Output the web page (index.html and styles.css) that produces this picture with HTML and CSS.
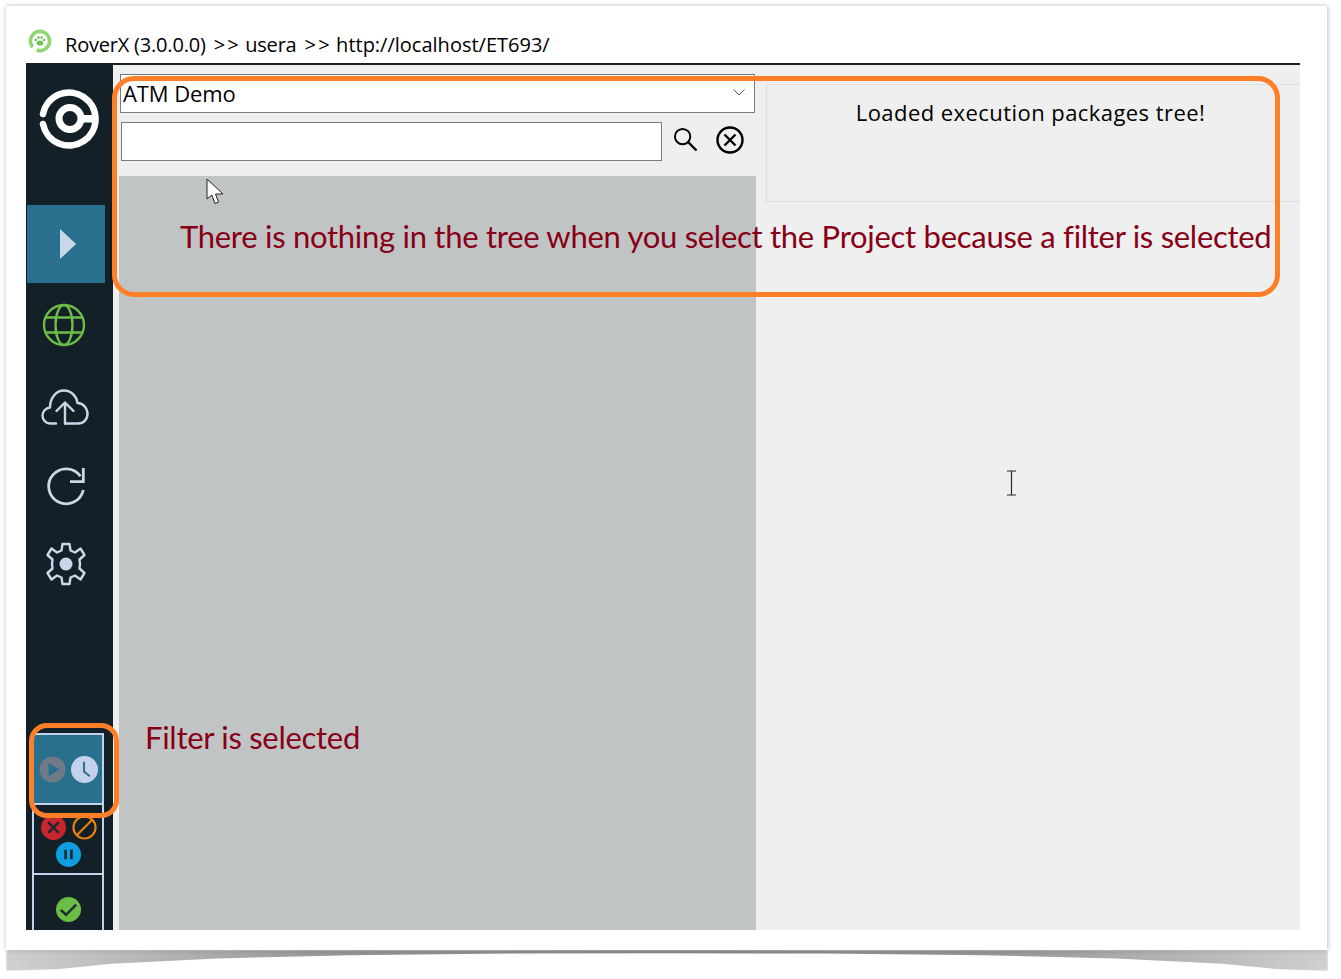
FILE: index.html
```html
<!DOCTYPE html>
<html lang="en">
<head>
<meta charset="utf-8">
<title>RoverX</title>
<link rel="stylesheet" href="styles.css">
</head>
<body>
<div class="drop-shadow"></div>
<main class="sheet">
  <header class="titlebar">
    <svg class="title-icon" viewBox="0 0 24 24"><circle cx="12" cy="12" r="9.600" fill="none" stroke="#8fd672" stroke-width="3.600" stroke-dasharray="50 5" transform="rotate(170 12 12)"/><g fill="#6fc25a"><ellipse cx="12" cy="14" rx="3.400" ry="2.600"/><circle cx="7.800" cy="11" r="1.300"/><circle cx="10.500" cy="8.600" r="1.300"/><circle cx="13.700" cy="8.600" r="1.300"/><circle cx="16.200" cy="11" r="1.300"/></g></svg>
    <div class="title-text"><span>RoverX (3.0.0.0)</span><span class="sep">&gt; &gt;</span><span>usera</span><span class="sep">&gt; &gt;</span><span class="url">http://localhost/ET693/</span></div>
  </header>
  <div class="app">
    <nav class="sidebar">
      <svg class="logo" viewBox="0 0 60 60"><g fill="none" stroke="#fff"><path d="M4 25 A26.500 26.500 0 1 1 4 35" stroke-width="6.600" stroke-linecap="round"/><circle cx="31" cy="29.500" r="11" stroke-width="7"/></g><rect x="40" y="26" width="16" height="7.500" fill="#fff"/></svg>
      <div class="nav-active"><svg class="play" viewBox="0 0 18 32"><path d="M0 0 L17 16 L0 32 Z" fill="#c9d7eb"/></svg></div>
      <svg class="nav-icon icon-globe" viewBox="0 0 44 44"><g fill="none" stroke="#6cbd45" stroke-width="2.400"><circle cx="22" cy="22" r="20"/><ellipse cx="22" cy="22" rx="8.500" ry="20"/><path d="M3.500 14.500 H40.500 M3.500 29.500 H40.500"/></g></svg>
      <svg class="nav-icon icon-cloud" viewBox="0 0 48 36"><g fill="none" stroke="#c9d7eb" stroke-width="2.400" stroke-linecap="round" stroke-linejoin="round"><path d="M15 34.500 H9 C4.500 34.500 1.500 30.500 1.500 26.500 C1.500 22.500 4.500 19 9 18.500 C9 9 15 1.500 23 1.500 C30 1.500 35.500 7 36.500 14 C42 14 46.500 19 46.500 25 C46.500 30.500 42.500 34.500 37 34.500 H24"/><path d="M24 34.500 V14 M15.500 22 L24 13.500 L32.500 22"/></g></svg>
      <svg class="nav-icon icon-refresh" viewBox="0 0 44 44"><g fill="none" stroke="#c9d7eb" stroke-width="2.800"><path d="M39.300 26 A17.500 17.500 0 1 1 36.500 12.200"/><path d="M39.300 4 V17.700 H26"/></g></svg>
      <svg class="nav-icon icon-gear" viewBox="0 0 44 44"><path d="M18.500 2 H25.500 L26.500 8.500 L31 10.500 L36.500 6.500 L40.500 13 L35.500 17.500 L36 22 L35.500 26.500 L40.500 31 L36.500 37.500 L31 33.500 L26.500 35.500 L25.500 42 H18.500 L17.500 35.500 L13 33.500 L7.500 37.500 L3.500 31 L8.500 26.500 L8 22 L8.500 17.500 L3.500 13 L7.500 6.500 L13 10.500 L17.500 8.500 Z" fill="none" stroke="#c9d7eb" stroke-width="2.400" stroke-linejoin="round"/><circle cx="22" cy="22" r="6.500" fill="#c9d7eb"/></svg>
      <div class="filters">
        <div class="filter filter-on">
          <svg class="status" viewBox="0 0 28 28"><circle cx="14" cy="14" r="13.500" fill="#6e7b87"/><path d="M10 7 L21 14 L10 21 Z" fill="#296f8e"/></svg>
          <svg class="status" viewBox="0 0 28 28"><circle cx="14" cy="14" r="14" fill="#c3d1ec"/><path d="M13.500 6 V16 L19.500 21" fill="none" stroke="#296f8e" stroke-width="2"/></svg>
        </div>
        <div class="filter filter-wrap">
          <svg class="status" viewBox="0 0 26 26"><circle cx="13" cy="13" r="13" fill="#c9252d"/><path d="M7.500 7.500 L18.500 18.500 M18.500 7.500 L7.500 18.500" stroke="#1d2a33" stroke-width="2.600"/></svg>
          <svg class="status" viewBox="0 0 26 26"><circle cx="13" cy="13" r="11.500" fill="none" stroke="#e8820c" stroke-width="2.200"/><path d="M5 21 L21 5" stroke="#e8820c" stroke-width="2.200"/></svg>
          <svg class="status pause" viewBox="0 0 26 26"><circle cx="13" cy="13" r="13" fill="#0e9ee0"/><path d="M10 8 V18 M16 8 V18" stroke="#1d2a33" stroke-width="2.800"/></svg>
        </div>
        <div class="filter filter-last">
          <svg class="status" viewBox="0 0 26 26"><circle cx="13" cy="13" r="13" fill="#6cbd45"/><path d="M5 13.500 L10.500 18.500 L21 8" fill="none" stroke="#1d2a33" stroke-width="2.600"/></svg>
        </div>
      </div>
    </nav>
    <section class="left">
      <div class="combo"><span>ATM Demo</span><svg class="chevron" viewBox="0 0 12 7"><path d="M.5 .5 L6 6 L11.500 .5" fill="none" stroke="#555" stroke-width="1"/></svg></div>
      <div class="search-row">
        <div class="search-input"></div>
        <svg class="search-icon" viewBox="0 0 26 26"><circle cx="10" cy="10" r="8" fill="none" stroke="#000" stroke-width="2"/><path d="M15.500 15.500 L24.500 24.500" stroke="#000" stroke-width="2.400"/></svg>
        <svg class="clear-icon" viewBox="0 0 28 28"><circle cx="14" cy="14" r="12.500" fill="none" stroke="#000" stroke-width="2.400"/><path d="M8.500 8.500 L19.500 19.500 M19.500 8.500 L8.500 19.500" stroke="#000" stroke-width="2.400"/></svg>
      </div>
      <div class="tree"></div>
    </section>
    <section class="right">
      <div class="message">Loaded execution packages tree!</div>
    </section>
  </div>
</main>

<div class="callout callout-main"></div>
<div class="callout callout-filter"></div>
<p class="note note-main">There is nothing in the tree when you select the Project because a filter is selected</p>
<p class="note note-filter">Filter is selected</p>
<svg class="cursor-arrow" viewBox="0 0 19 27"><path d="M1 1 V21 L5.800 17 L9 25.500 L12.500 24 L9.500 16 H17 Z" fill="#fff" stroke="#222" stroke-width="1"/></svg>
<svg class="cursor-ibeam" viewBox="0 0 11 26"><path d="M1 1 H10 M5.500 1 V25 M1 25 H10" fill="none" stroke="#222b38" stroke-width="1.200"/></svg>
</body>
</html>
```

FILE: styles.css
```css
* { box-sizing: border-box; }
html, body { margin: 0; padding: 0; width: 1341px; height: 979px; overflow: hidden; background: #fff; }
body { position: relative; font-family: "Open Sans", "Noto Sans", sans-serif; color: #000; }

.sheet {
  position: relative;
  width: 1321px;
  height: 944px;
  margin: 6px 0 0 6px;
  padding: 20px 27px 20px 20px;
  background: #fff;
  display: flex;
  flex-direction: column;
  box-shadow: 0 0 5px rgba(0, 0, 0, .22), 2px 0 4px rgba(0, 0, 0, .08);
}
.drop-shadow {
  position: absolute;
  left: 6px;
  top: 950px;
  width: 1322px;
  height: 21px;
  background: linear-gradient(90deg, #d0d0d0 0%, #b8b8b8 10%, #969696 25%, #8c8c8c 50%, #969696 75%, #b8b8b8 90%, #d0d0d0 100%);
  clip-path: polygon(0 0, 100% 0, 100% 100%, 96% 90%, 92% 65%, 84% 40%, 74% 25%, 62% 17%, 50% 15%, 38% 17%, 26% 25%, 16% 40%, 8% 65%, 4% 90%, 0 100%);
  filter: blur(1px);
}

.titlebar { height: 37px; display: flex; align-items: flex-start; flex: none; }
.title-icon { width: 24px; height: 24px; margin: 3px 0 0 2px; flex: none; }
.title-text { display: flex; gap: 8px; margin: 5px 0 0 13px; font-size: 20px; line-height: 28px; letter-spacing: -.2px; white-space: nowrap; }
.sep { letter-spacing: -1.500px; }
.url { letter-spacing: 0; }

.app { flex: 1; min-height: 0; display: flex; background: #efefef; border-top: 2px solid #132028; }

.sidebar { width: 87px; flex: none; background: #132028; display: flex; flex-direction: column; }
.logo { width: 60px; height: 60px; margin: 24px 0 0 13px; flex: none; }
.nav-active { width: 78px; height: 78px; margin: 56px 0 0 1px; background: #296f8e; display: flex; align-items: center; justify-content: center; flex: none; }
.play { width: 17px; height: 32px; margin-left: 4px; }
.nav-icon { display: block; flex: none; width: 44px; height: 44px; }
.icon-globe { margin: 20px 0 0 16px; }
.icon-cloud { width: 48px; height: 36px; margin: 42px 0 0 15px; }
.icon-refresh { margin: 39px 0 0 18px; }
.icon-gear { margin: 34px 0 0 18px; }

.filters { margin: auto 0 0 6px; width: 72px; height: 197px; flex: none; }
.filter { width: 72px; height: 70px; border: 2px solid #c3d1ec; border-bottom: 0; display: flex; align-items: center; justify-content: center; }
.filter-on { background: #296f8e; gap: 5px; border-bottom: 2px solid #c3d1ec; height: 72px; padding-top: 1px; }
.filter-on .status { width: 27px; height: 27px; }
.filter-wrap { height: 70px; margin-top: -2px; flex-wrap: wrap; gap: 2px 6px; align-content: flex-start; padding: 10px 0 0 2px; }
.filter-wrap .status { width: 25px; height: 25px; }
.filter-wrap .pause { margin-right: 2px; }
.filter-last { height: 57px; border-bottom: 0; padding-top: 14px; }
.filter-last .status { width: 25px; height: 25px; }

.left { width: 637px; margin-left: 6px; flex: none; display: flex; flex-direction: column; }
.combo { width: 635px; height: 39px; margin: 9px 0 0 1px; background: #fff; border: 1px solid #7a7a7a; display: flex; align-items: center; justify-content: space-between; padding: 0 9px 2px 2px; font-size: 22px; line-height: 36px; letter-spacing: -.1px; flex: none; }
.chevron { width: 12px; height: 7px; }
.search-row { display: flex; align-items: center; margin: 9px 0 0 2px; height: 39px; flex: none; }
.search-input { width: 541px; height: 39px; background: #fff; border: 1px solid #7a7a7a; }
.search-icon { width: 25px; height: 25px; margin: 0 0 5px 11px; }
.clear-icon { width: 28px; height: 28px; margin: 0 0 4px 18px; }
.tree { flex: 1; margin-top: 15px; background: #c1c4c5; }

.right { flex: 1; min-width: 0; padding: 19px 0 0 10px; }
.message { height: 118px; border: 1px solid #dedede; border-right: 0; text-align: center; font-size: 22px; line-height: 30px; padding: 12px 6px 0 0; letter-spacing: .44px; }

.callout { position: absolute; border: 5px solid #ff7f27; }
.callout-main { left: 112px; top: 76px; width: 1168px; height: 221px; border-radius: 22px; }
.callout-filter { left: 29px; top: 723px; width: 90px; height: 95px; border-radius: 18px; }

.note { position: absolute; margin: 0; font-family: Lato, "Open Sans", sans-serif; color: #880015; white-space: nowrap; font-size: 31px; line-height: 40px; letter-spacing: -.28px; }
.note-main { left: 180px; top: 216px; }
.note-filter { left: 145px; top: 717px; }

.cursor-arrow { position: absolute; left: 206px; top: 178px; width: 19px; height: 27px; }
.cursor-ibeam { position: absolute; left: 1006px; top: 470px; width: 11px; height: 26px; }
```
